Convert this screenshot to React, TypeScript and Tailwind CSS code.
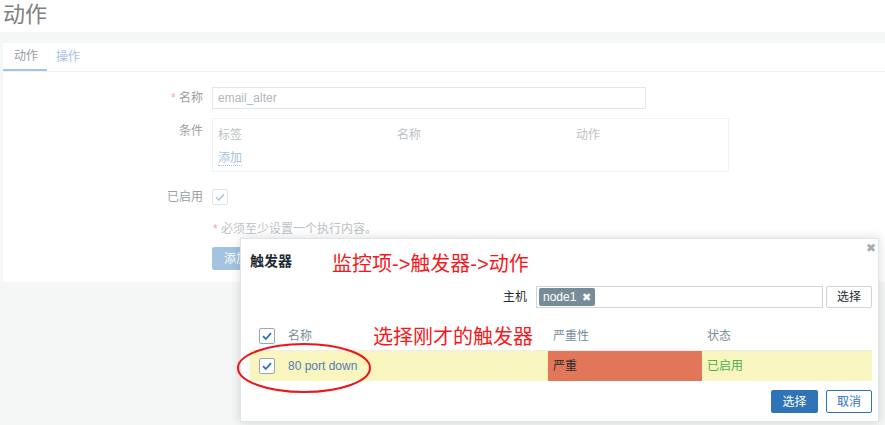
import React from "react";

const font = { fontFamily: '"Liberation Sans", Arial, "Noto Sans CJK SC", sans-serif' };

const Check: React.FC<{ className?: string }> = ({ className }) => (
  <span
    className={`flex h-4 w-4 items-center justify-center rounded-[2px] border border-[#98a7b3] bg-white ${className ?? ""}`}
  >
    <svg viewBox="0 0 12 12" className="h-3 w-3">
      <path d="M2 6.2 L4.8 9 L10 3.2" fill="none" stroke="#2b72b5" strokeWidth="1.8" />
    </svg>
  </span>
);

const App: React.FC = () => {
  return (
    <div className="relative h-[425px] w-[885px] overflow-hidden bg-[#f5f6f6] text-[12px] text-[#1f2c33]" style={font}>
      {/* Page header */}
      <div className="h-[32px] bg-white pl-[3px] pt-[1px]">
        <h1 className="text-[22px] leading-[28px] font-normal text-[#808080]">动作</h1>
      </div>

      {/* Card */}
      <div className="ml-[3px] mt-[11px] h-[239px] bg-white">
        <div className="flex h-[29px] border-b border-[#eef0f1]">
          <div className="flex w-[44px] items-center justify-center border-b-2 border-[#a9c3df] pl-[2px] text-[#969ca0]">
            动作
          </div>
          <div className="flex w-[42px] items-center justify-center text-[#a6c2de]">操作</div>
        </div>

        <div className="pt-[15px]">
          <div className="flex items-center">
            <div className="w-[209px] pr-[9px] text-right text-[#9aa0a4]">
              <span className="text-[#f3a89d]">* </span>名称
            </div>
            <div className="flex h-[22px] w-[434px] items-center border border-[#e3e6e8] px-[5px] text-[#b0b6ba]">
              email_alter
            </div>
          </div>

          <div className="mt-[9px] flex">
            <div className="w-[209px] pr-[9px] pt-[4px] text-right text-[#9aa0a4]">条件</div>
            <div className="h-[54px] w-[517px] border border-[#f0f2f3] px-[5px] pt-[7px]">
              <div className="flex text-[#bcc1c4]">
                <span className="w-[179px]">标签</span>
                <span className="w-[179px]">名称</span>
                <span>动作</span>
              </div>
              <div className="mt-[5px]">
                <span className="border-b border-dotted border-[#a9c3df] text-[#a6c2de]">添加</span>
              </div>
            </div>
          </div>

          <div className="mt-[16px] flex items-center">
            <div className="w-[209px] pr-[9px] text-right text-[#9aa0a4]">已启用</div>
            <span className="flex h-[16px] w-[16px] items-center justify-center rounded-[2px] border border-[#dfe4e7]">
              <svg viewBox="0 0 12 12" className="h-3 w-3">
                <path d="M2 6.2 L4.8 9 L10 3.2" fill="none" stroke="#a9c3df" strokeWidth="1.5" />
              </svg>
            </span>
          </div>

          <div className="mt-[14px] pl-[210px] text-[#bcc1c4]">
            <span className="text-[#f3a89d]">* </span>必须至少设置一个执行内容。
          </div>

          <div className="mt-[9px] pl-[209px]">
            <div className="flex h-[23px] w-[50px] items-center rounded-[2px] bg-[#a4c3e0] pl-[12px] text-white">
              添加
            </div>
          </div>
        </div>
      </div>

      {/* Dialog */}
      <div className="absolute left-[240px] top-[238px] h-[184px] w-[639px] border border-[#dfe4e7] bg-white shadow-[0_0_10px_rgba(0,0,0,0.15)]">
        <div className="flex items-start justify-between pl-[9px] pr-[2px] pt-[2px]">
          <div className="pt-[10px] text-[14px] font-bold text-[#1f2c33]">触发器</div>
          <span className="text-[12px] leading-[14px] text-[#a3aab0]">✖</span>
        </div>

        <div className="mt-[14px] flex items-center justify-end pr-[6px]">
          <span className="mr-[9px] text-[#1f2c33]">主机</span>
          <div className="flex h-[22px] w-[287px] items-center border border-[#cfd5d9] px-[2px]">
            <span className="flex h-[18px] items-center gap-[6px] rounded-[2px] bg-[#768d99] px-[4px] text-white">
              node1
              <span className="text-[11px] leading-none">✖</span>
            </span>
          </div>
          <div className="ml-[3px] flex h-[22px] w-[46px] items-center justify-center rounded-[2px] border border-[#cfd5d9] text-[#1f2c33]">
            选择
          </div>
        </div>

        <div className="mt-[13px] pl-[9px] pr-[6px]">
          <div className="flex h-[30px] items-center border-b border-[#ebeeef] text-[#768d99]">
            <div className="w-[38px] pl-[9px]">
              <Check />
            </div>
            <div className="w-[260px]">名称</div>
            <div className="w-[154px] pl-[5px]">严重性</div>
            <div className="pl-[5px]">状态</div>
          </div>
          <div className="flex h-[30px] items-stretch bg-[#f8f5bf]">
            <div className="flex w-[38px] items-center pl-[9px]">
              <Check />
            </div>
            <div className="flex w-[260px] items-center text-[#4f80b0]">80 port down</div>
            <div className="flex w-[154px] items-center bg-[#e17758] pl-[5px] text-[#1f2c33]">严重</div>
            <div className="flex items-center pl-[5px] text-[#4caf50]">已启用</div>
          </div>
        </div>

        <div className="mt-[9px] flex justify-end gap-[8px] pr-[6px]">
          <div className="flex h-[23px] w-[47px] items-center justify-center rounded-[2px] bg-[#2f73b9] text-white">
            选择
          </div>
          <div className="flex h-[23px] w-[46px] items-center justify-center rounded-[2px] border border-[#2f73b9] text-[#2f73b9]">
            取消
          </div>
        </div>
      </div>

      {/* Annotations */}
      <div className="absolute left-[332px] top-[250px] text-[20px] leading-[28px] text-[#f5191c]">
        监控项-&gt;触发器-&gt;动作
      </div>
      <div className="absolute left-[373px] top-[323px] text-[20px] leading-[28px] text-[#f5191c]">选择刚才的触发器</div>
      <svg className="absolute left-[234px] top-[340px]" width="140" height="56" viewBox="0 0 140 56">
        <ellipse cx="70" cy="28" rx="66" ry="24" fill="none" stroke="#f0141a" strokeWidth="2" />
      </svg>
    </div>
  );
};

export default App;
